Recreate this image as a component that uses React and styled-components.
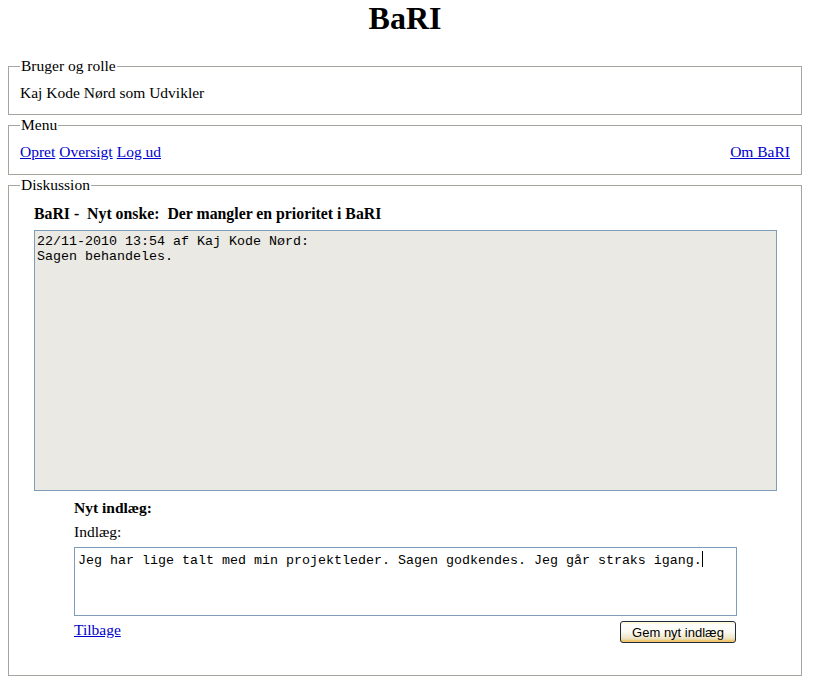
import React from 'react'
import styled, { createGlobalStyle } from 'styled-components'

const Global = createGlobalStyle`
  body {
    margin: 0;
    padding: 0 8px;
    background: #fff;
    font-family: "Liberation Serif", "Times New Roman", serif;
    font-size: 15.5px;
    color: #000;
  }
`

const Page = styled.div`
  width: 794px;
`

const Title = styled.h1`
  margin: 0 0 20px;
  font-size: 32px;
  line-height: 37px;
  text-align: center;
  font-weight: bold;
`

const Box = styled.fieldset`
  margin: 0 0 1px;
  padding: 9px 11px ${p => p.$pb || '12px'};
  border: 1px solid #a5a5a0;
  min-width: 0;
`

const Legend = styled.legend`
  padding: 0 1px;
  line-height: 18px;
`

const Line = styled.div`
  line-height: 18px;
`

const MenuRow = styled.div`
  display: flex;
  justify-content: space-between;
  line-height: 18px;
`

const Links = styled.div`
  display: flex;
  gap: 4px;
`

const Link = styled.a`
  color: #0000cc;
  text-decoration: underline;
  cursor: pointer;
`

const Discussion = styled.div`
  padding: 2px 14px 0;
`

const Heading = styled.div`
  font-weight: bold;
  font-size: 15.8px;
  line-height: 18px;
  margin-bottom: 7px;
  white-space: pre;
`

const Log = styled.div`
  box-sizing: border-box;
  width: 743px;
  height: 261px;
  border: 1px solid #7f9db9;
  background: #ebe9e3;
  padding: 3px 2px;
  font-family: "Liberation Mono", "Courier New", monospace;
  font-size: 13.33px;
  line-height: 15px;
  white-space: pre;
`

const NewEntry = styled.div`
  width: 663px;
  margin: 8px 0 0 40px;
`

const Label = styled.div`
  line-height: 18px;
  margin-bottom: 6px;
  font-weight: ${p => (p.$bold ? 'bold' : 'normal')};
`

const EntryBox = styled.div`
  box-sizing: border-box;
  height: 69px;
  margin-top: 6px;
  border: 1px solid #7f9db9;
  padding: 3px 3px;
  font-family: "Liberation Mono", "Courier New", monospace;
  font-size: 13.33px;
  line-height: 15px;
  white-space: pre;
`

const Caret = styled.span`
  display: inline-block;
  width: 1px;
  height: 16px;
  background: #000;
  vertical-align: -3px;
`

const Actions = styled.div`
  display: flex;
  justify-content: space-between;
  align-items: flex-start;
  margin-top: 5px;
`

const Button = styled.button`
  box-sizing: border-box;
  width: 116px;
  height: 22px;
  margin: 0 1px 0 0;
  padding: 0;
  border: 1px solid #1c2a3c;
  border-radius: 3px;
  background: linear-gradient(#ffffff 0%, #fbf9f0 50%, #efe6c6 80%, #e2c57a 100%);
  box-shadow: inset 0 -2px 0 #f2c770, inset 0 2px 0 #fff9e0;
  font-family: "Liberation Sans", Arial, sans-serif;
  font-size: 13px;
  color: #000;
`

export default function App() {
  return (
    <Page>
      <Global />
      <Title>BaRI</Title>
      <Box>
        <Legend>Bruger og rolle</Legend>
        <Line>Kaj Kode Nørd som Udvikler</Line>
      </Box>
      <Box $pb="13px">
        <Legend>Menu</Legend>
        <MenuRow>
          <Links>
            <Link>Opret</Link>
            <Link>Oversigt</Link>
            <Link>Log ud</Link>
          </Links>
          <Link>Om BaRI</Link>
        </MenuRow>
      </Box>
      <Box $pb="32px">
        <Legend>Diskussion</Legend>
        <Discussion>
          <Heading>{'BaRI -  Nyt onske:  Der mangler en prioritet i BaRI'}</Heading>
          <Log>{'22/11-2010 13:54 af Kaj Kode Nørd:\nSagen behandeles.'}</Log>
          <NewEntry>
            <Label $bold>Nyt indlæg:</Label>
            <Label>Indlæg:</Label>
            <EntryBox>
              Jeg har lige talt med min projektleder. Sagen godkendes. Jeg går straks igang.<Caret />
            </EntryBox>
            <Actions>
              <Link>Tilbage</Link>
              <Button>Gem nyt indlæg</Button>
            </Actions>
          </NewEntry>
        </Discussion>
      </Box>
    </Page>
  )
}
